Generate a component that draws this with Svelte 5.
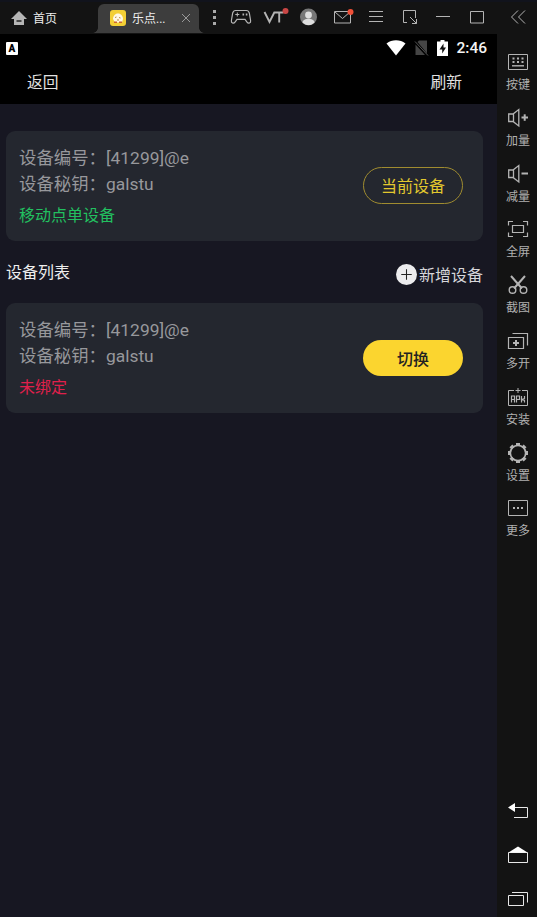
<script lang="ts">
  type Device = {
    code: string;
    secret: string;
    status: string;
    bound: boolean;
    action: string;
  };

  const current: Device = {
    code: '[41299]@e',
    secret: 'galstu',
    status: '移动点单设备',
    bound: true,
    action: '当前设备'
  };

  const devices: Device[] = [
    { code: '[41299]@e', secret: 'galstu', status: '未绑定', bound: false, action: '切换' }
  ];

  const tools = [
    { icon: 'keys', label: '按键' },
    { icon: 'louder', label: '加量' },
    { icon: 'quieter', label: '减量' },
    { icon: 'full', label: '全屏' },
    { icon: 'cut', label: '截图' },
    { icon: 'multi', label: '多开' },
    { icon: 'apk', label: '安装' },
    { icon: 'gear', label: '设置' },
    { icon: 'more', label: '更多' }
  ];

  const windowIcons = ['pad', 'vt', 'user', 'mail', 'menu', 'resize', 'min', 'max'];
  const gearTeeth = [0, 45, 90, 135, 180, 225, 270, 315];
</script>

{#snippet glyph(name: string)}
  <svg class="glyph" viewBox="0 0 24 24" width="24" height="24">
    {#if name === 'pad'}
      <path d="M6.5 5.5h11c1.5 0 2.4 1 2.8 2.5l1.3 7.5c.5 2.5-2.2 3.5-3.6 1.6l-2-2.8H8l-2 2.8c-1.4 1.9-4.1.9-3.6-1.6L3.7 8c.4-1.5 1.3-2.5 2.8-2.5z" stroke-width="1.2" />
      <path d="M6.3 9.5h4M8.3 7.5v4" />
      <path d="M13.5 9.5h1.6M16.8 9.5h1.6" stroke-width="1.8" />
    {:else if name === 'vt'}
      <path d="M1.500 7l5 10 4.800-9.500h9.200M16.200 7.500v10" stroke-width="1.900" />
      <circle class="dot" cx="22.500" cy="6" r="3" />
    {:else if name === 'user'}
      <circle class="fill-dim" cx="12.500" cy="12" r="8.500" />
      <circle class="fill-light" cx="12.500" cy="10" r="3.400" />
      <path class="fill-light" d="M6.500 17.500c.5-5 11.500-5 12 0-3 3.400-9 3.400-12 0z" />
    {:else if name === 'mail'}
      <path d="M4.500 6.500h16v11.500h-16zM5 7l7.500 6.500L20 7" />
      <circle class="dot bright" cx="20.500" cy="7" r="3" />
    {:else if name === 'menu'}
      <path d="M5 6.500h14M5 11.500h14M5 16.500h14" />
    {:else if name === 'resize'}
      <path d="M9 17.500H5.500v-12h12V13M12 12l6.500 6.500M18.500 14v4.500H14" />
    {:else if name === 'min'}
      <path d="M5 11.500h14" />
    {:else if name === 'max'}
      <path d="M5.500 6.500h13v11.500h-13z" />
    {:else if name === 'fold'}
      <path d="M12 5.500l-6.500 6.500L12 18.500M19 5.500l-6.500 6.500L19 18.500" />
    {:else if name === 'keys'}
      <path d="M2.500 4.500h19v15h-19z" />
      <path d="M6.500 8.500h11M6.500 12h11" stroke-width="2" stroke-dasharray="2 2.500" />
      <path d="M6 15.800h12" stroke-width="1.400" />
    {:else if name === 'louder' || name === 'quieter'}
      <path d="M2.700 8h4.300l5.800-4.500v16.500L7 15.500H2.700zM7.500 8v7.500" stroke-width="1.300" />
      <path d="M15.500 11.500h6.500" stroke-width="2" />
      {#if name === 'louder'}
        <path d="M18.700 8.300v6.500" stroke-width="2" />
      {/if}
    {:else if name === 'full'}
      <path d="M2.500 8.500v-4H7M17 4.500h4.500v4M21.500 15.500v4H17M7 19.500H2.500v-4M6.500 8.500h11v7h-11z" stroke-width="1.200" />
    {:else if name === 'cut'}
      <path d="M5 3l11 12.500M19 3L8 15.500" stroke-width="2" />
      <circle cx="6.500" cy="17" r="3.300" stroke-width="1.400" />
      <circle cx="17.500" cy="17" r="3.300" stroke-width="1.400" />
    {:else if name === 'multi'}
      <path d="M2.500 8.500h15v11h-15zM6.500 4.500h15v12" stroke-width="1.200" />
      <path d="M7 14h6M10 11v6" stroke-width="2" />
    {:else if name === 'apk'}
      <path d="M8 5.500H2.500v15h19v-15H16M12 3v5M9.500 5.500h5" />
      <path d="M5.500 17.500v-6.500h3v6.500M5.500 14.500h3M10.500 17.500v-6.500h3v3.500h-3M15.500 11v6.500M18.500 11v2.500l-2.500 1 2.500 1v2" stroke-width="1.200" />
    {:else if name === 'gear'}
      <circle cx="12" cy="12" r="7.700" stroke-width="1.700" />
      {#each gearTeeth as angle}
        <path d="M10 3.500h4" stroke-width="3" transform="rotate({angle} 12 12)" />
      {/each}
    {:else if name === 'more'}
      <path d="M2.500 4.500h19v15h-19z" />
      <path d="M7 12h10" stroke-width="2" stroke-dasharray="2 2" />
    {:else if name === 'back'}
      <path d="M8 8.500h13.500v10H8" />
      <path class="fill-light" d="M2 8.500l7-4.500v9z" />
    {:else if name === 'house'}
      <path d="M2.500 9.500h19v10h-19z" />
      <path class="fill-light" d="M2.500 9.500L12 3.500l9.500 6z" />
    {:else if name === 'recent'}
      <path d="M2.500 8.500h15v10h-15zM6 5.500h15.500v10" />
    {/if}
  </svg>
{/snippet}

{#snippet card(device: Device)}
  <section class="card">
    <div class="info">
      <p>设备编号：{device.code}</p>
      <p>设备秘钥：{device.secret}</p>
      <p class="status" class:bound={device.bound}>{device.status}</p>
    </div>
    <button class="action" class:outline={device.bound}>{device.action}</button>
  </section>
{/snippet}

<div class="window">
  <header class="titlebar">
    <div class="home">
      <svg viewBox="0 0 16 14" width="16" height="14">
        <path d="M8 0L0 8h3v6h10V8h3z" fill="#b5b5b5" />
        <path d="M5.5 10h5" stroke="#222" stroke-width="1.5" />
      </svg>
      <span>首页</span>
    </div>
    <div class="tab">
      <svg viewBox="0 0 16 16" width="16" height="16">
        <rect width="16" height="16" rx="3" fill="#f3cf35" />
        <path d="M3 9c0-3 2-5.500 5-5.500S13 6 13 9l-1 3.500H5z" fill="#fff8e4" />
        <path d="M5 7.500l1.500-.5M9 7.500l1.500.5M7 10h2" stroke="#b98943" fill="none" />
        <path d="M4 12.300h3M9 12.300h3" stroke="#cc6530" stroke-width="1.500" />
      </svg>
      <span>乐点...</span>
      <svg class="close" viewBox="0 0 10 10" width="10" height="10">
        <path d="M1 1l8 8M9 1L1 9" />
      </svg>
    </div>
    <div class="dots"><i></i><i></i><i></i></div>
    <div class="controls">
      {#each windowIcons as name}
        <div class="control">{@render glyph(name)}</div>
      {/each}
    </div>
    <div class="fold">{@render glyph('fold')}</div>
  </header>

  <div class="body">
    <main class="phone">
      <div class="statusbar">
        <span class="badge">A</span>
        <div class="signals">
          <svg viewBox="0 0 20 16" width="20" height="16">
            <path d="M.5 3.500C6-.8 14-.8 19.500 3.500L10 15.500z" fill="#fff" />
          </svg>
          <svg viewBox="0 0 15 16" width="15" height="16">
            <path d="M3.500 2l1.500-1.500h8v13zM1.500 4.500V15H11z" fill="#454545" />
            <path d="M1 1.500L14 15.500" stroke="#555" />
          </svg>
          <svg viewBox="0 0 11 16" width="11" height="16">
            <path d="M3.500 0h4v1.500H11V16H0V1.500h3.500z" fill="#fff" />
            <path d="M6.500 3.500L2.500 9.500h2.700v4L9 7.500H6.500z" fill="#111" />
          </svg>
          <span class="time">2:46</span>
        </div>
      </div>
      <div class="navbar">
        <span>返回</span>
        <span>刷新</span>
      </div>

      <div class="content">
        {@render card(current)}
        <div class="list-head">
          <span>设备列表</span>
          <div class="add">
            <svg viewBox="0 0 20 20" width="21" height="21">
              <circle cx="10" cy="10" r="10" fill="#ececee" />
              <path d="M10 5v10M5 10h10" stroke="#222" stroke-width="1" />
            </svg>
            <span>新增设备</span>
          </div>
        </div>
        {#each devices as device}
          {@render card(device)}
        {/each}
      </div>
    </main>

    <aside class="sidebar">
      {#each tools as tool}
        <div class="tool">
          {@render glyph(tool.icon)}
          <span>{tool.label}</span>
        </div>
      {/each}
      <div class="system">
        {@render glyph('back')}
        {@render glyph('house')}
        {@render glyph('recent')}
      </div>
    </aside>
  </div>
</div>

<style>
  :global(body) {
    background: #131313;
  }

  .window {
    height: 917px;
    display: flex;
    flex-direction: column;
    font-family: Roboto, 'Noto Sans CJK SC', sans-serif;
    overflow: hidden;
  }

  .titlebar {
    height: 34px;
    flex: none;
    display: flex;
    box-sizing: border-box;
    border-top: 2px solid #11131c;
    background: #131313;
    color: #eee;
    font-size: 12px;
  }

  .home {
    width: 87px;
    padding: 0 0 1px 11px;
    display: flex;
    align-items: center;
    gap: 6px;
  }

  .tab {
    position: relative;
    width: 101px;
    box-sizing: border-box;
    margin: 2px 0 1px;
    padding: 0 8px 2px 12px;
    display: flex;
    align-items: center;
    gap: 6px;
    border-radius: 6px 6px 0 0;
    background: #3d3d3d;
  }

  /* flared feet of the tab */
  .tab::before,
  .tab::after {
    content: '';
    position: absolute;
    bottom: 0;
    width: 5px;
    height: 5px;
  }

  .tab::before {
    right: 100%;
    background: radial-gradient(circle at 0 0, transparent 4.5px, #3d3d3d 5px);
  }

  .tab::after {
    left: 100%;
    background: radial-gradient(circle at 100% 0, transparent 4.5px, #3d3d3d 5px);
  }

  .close {
    margin-left: auto;
    stroke: #999;
    fill: none;
  }

  .dots {
    width: 30px;
    box-sizing: border-box;
    padding-bottom: 1px;
    display: flex;
    flex-direction: column;
    align-items: center;
    justify-content: center;
    gap: 3px;
  }

  .dots i {
    width: 3px;
    height: 3px;
    background: #aaa;
  }

  .controls {
    width: 270px;
    margin-left: -5px;
    display: flex;
  }

  .control {
    flex: 1;
    display: flex;
    justify-content: center;
    padding-top: 3px;
  }

  .fold {
    margin-left: auto;
    width: 39px;
    padding-top: 3px;
    text-align: center;
  }

  .glyph {
    flex: none;
    overflow: visible;
    fill: none;
    stroke: #b4b4b4;
    stroke-width: 1;
  }

  .glyph .dot {
    fill: #c94645;
    stroke: none;
  }

  .glyph .dot.bright {
    fill: #f05038;
  }

  .glyph .fill-dim {
    fill: #777;
    stroke: none;
  }

  .glyph .fill-light {
    fill: #ddd;
    stroke: none;
  }

  .body {
    flex: 1;
    min-height: 0;
    display: flex;
  }

  .phone {
    width: 497px;
    background: #171722;
  }

  .statusbar {
    height: 28px;
    padding: 0 10px 0 6px;
    display: flex;
    align-items: center;
    justify-content: space-between;
    background: #000;
  }

  .badge {
    width: 12px;
    height: 13px;
    border-radius: 1px;
    background: #fff;
    color: #000;
    font-size: 10px;
    font-weight: 900;
    line-height: 13px;
    text-align: center;
  }

  .signals {
    display: flex;
    align-items: center;
    gap: 8px;
  }

  .time {
    color: #f4f4f4;
    font-size: 15.500px;
    font-weight: 500;
  }

  .navbar {
    height: 41.500px;
    box-sizing: border-box;
    padding: 0 35px 2px 27px;
    display: flex;
    align-items: center;
    justify-content: space-between;
    background: #000;
    color: #e0e0e0;
    font-size: 15.800px;
  }

  .content {
    padding: 27px 14px 0 6px;
  }

  .card {
    height: 110px;
    box-sizing: border-box;
    padding: 2px 20px 0 13px;
    display: flex;
    align-items: center;
    justify-content: space-between;
    border-radius: 9px;
    background: #24272f;
  }

  .info p {
    margin: 0;
    color: #97989c;
    font-size: 17.400px;
    line-height: 26px;
  }

  .info .status {
    margin-top: 6px;
    color: #e0204c;
    font-size: 16px;
  }

  .info .status.bound {
    color: #22c060;
  }

  .action {
    width: 100px;
    height: 36px;
    margin-bottom: 2px;
    padding: 0 0 1px;
    border: 0;
    border-radius: 18px;
    background: #fbd52f;
    color: #222;
    font-family: inherit;
    font-size: 16px;
    font-weight: 500;
  }

  .action.outline {
    height: 37px;
    border: 1px solid #a08c30;
    border-radius: 19px;
    background: none;
    color: #e2c82e;
    font-weight: 400;
  }

  .list-head {
    height: 62.500px;
    box-sizing: border-box;
    padding-bottom: 1px;
    display: flex;
    justify-content: space-between;
    align-items: center;
    color: #eee;
    font-size: 16px;
  }

  .add {
    display: flex;
    align-items: center;
    gap: 2px;
    padding-top: 6px;
    color: #d6d6da;
  }

  .sidebar {
    margin-left: auto;
    width: 39px;
    box-sizing: border-box;
    padding: 16px 0 0 1px;
    display: flex;
    flex-direction: column;
    align-items: center;
    background: #131313;
  }

  .tool {
    height: 55.800px;
    flex: none;
    display: flex;
    flex-direction: column;
    align-items: center;
    gap: 3px;
    color: #b0b0b0;
    font-size: 12px;
    line-height: 17px;
  }

  .system {
    margin-top: auto;
    padding-bottom: 6px;
    display: flex;
    flex-direction: column;
    gap: 20px;
  }

  .system .glyph {
    stroke: #e8e8e8;
  }

  .system .glyph .fill-light {
    fill: #fff;
  }
</style>
